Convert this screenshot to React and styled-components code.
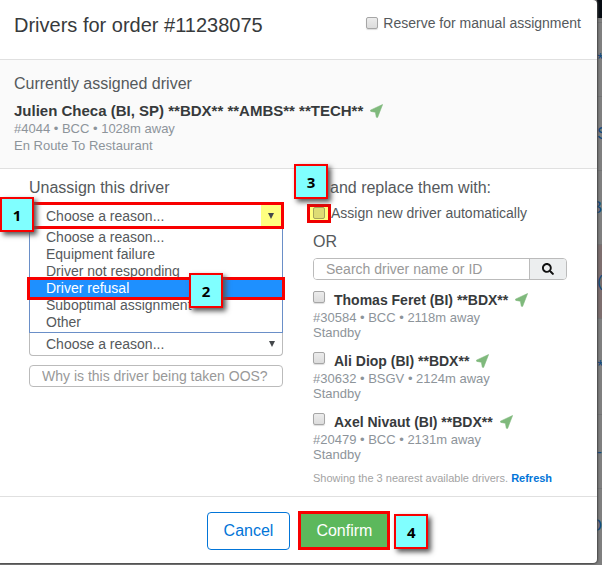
import React from "react";
import styled, { createGlobalStyle } from "styled-components";
import { FaSearch } from "react-icons/fa";

const GlobalStyle = createGlobalStyle`
  *, *::before, *::after { box-sizing: border-box; }
  body {
    margin: 0;
    background: #7f7f7f;
    color: #55595c;
    font-family: "Liberation Sans", Arial, sans-serif;
    font-size: 14px;
    line-height: 18px;
  }
  button, input, select { font: inherit; color: inherit; margin: 0; }
  h1, h2, p, ul { margin: 0; padding: 0; font-weight: normal; }
`;

const Page = styled.div`
  display: grid;
  grid-template-columns: minmax(0, 1fr) 5px;
  min-height: 100vh;
  overflow: hidden;
`;

const Dialog = styled.main`
  align-self: start;
  background: #fff;
  border-radius: 0 4px 4px 0;
  box-shadow: 0 0 2px 1px #444;
  z-index: 1;
`;

const Backdrop = styled.aside`
  overflow: hidden;
  background: #7f7f7f;
`;

const BackdropBar = styled.div`
  height: 18px;
  margin-bottom: 4px;
  background: #060c12;
`;

const BackdropRow = styled.div`
  display: flex;
  justify-content: ${(p) => p.$align || "flex-end"};
  align-items: center;
  height: ${(p) => p.$height || 74}px;
  border-top: 1px solid #737475;
  background: ${(p) => (p.$alert ? "#7d6e6e" : "transparent")};
  color: #134a80;
  font-size: 17px;
`;

const Header = styled.header`
  display: flex;
  justify-content: space-between;
  padding: 12px 16px 21px 14px;
  border-bottom: 1px solid #e0e0e0;
`;

const Title = styled.h1`
  color: #373a3c;
  font-size: 20px;
  line-height: 26px;
`;

const CheckLabel = styled.label`
  display: flex;
  align-items: center;
  gap: ${(p) => p.$gap || 5}px;
  height: 22px;
`;

const Checkbox = styled.input`
  appearance: none;
  flex: none;
  width: 12px;
  height: 12px;
  border: 1px solid #a6a6a6;
  border-radius: 2px;
  background: linear-gradient(#ececec, #dcdcdc);
  box-shadow: 0 1px 1px #ddd;
  &:checked { background: #0275d8; }
`;

const Assigned = styled.section`
  padding: 14px;
  background: #fafafa;
  border-bottom: 1px solid #e0e0e0;
`;

const SectionTitle = styled.h2`
  font-size: 16px;
  line-height: 20px;
  padding-left: ${(p) => p.$indent || 0}px;
`;

const DriverName = styled.div`
  display: flex;
  align-items: center;
  gap: 7px;
  color: #373a3c;
  font-size: 14px;
  font-weight: bold;
  line-height: 18px;
`;

const Meta = styled.p`
  color: #8d949a;
  font-size: 13px;
  line-height: ${(p) => p.$line || 15}px;
`;

const AssignedName = styled(DriverName)`
  margin-top: 8px;
  font-size: 15px;
`;

const Columns = styled.div`
  display: grid;
  grid-template-columns: minmax(0, 1fr) minmax(0, 1fr);
  gap: 30px;
  padding: 9px 30px 10px 29px;
`;

const Column = styled.section`
  display: flex;
  flex-direction: column;
`;

const SelectWrap = styled.div`
  position: relative;
  display: flex;
  height: ${(p) => (p.$marked ? 27 : 23)}px;
  margin: ${(p) => (p.$marked ? "4px -1px 0 -1px" : "0")};
  border: ${(p) => (p.$marked ? "3px solid #f80000" : "1px solid #bbb")};
  border-top-width: ${(p) => (p.$marked ? 3 : 0)}px;
  border-radius: ${(p) => (p.$marked ? "0" : "0 0 4px 4px")};
`;

const Select = styled.select`
  appearance: none;
  flex: 1;
  width: 100%;
  border: 0;
  background: transparent;
  padding: 0 26px 0 ${(p) => (p.$marked ? 15 : 16)}px;
  outline: none;
`;

const Arrow = styled.span`
  position: absolute;
  inset: 0 0 0 auto;
  display: flex;
  align-items: center;
  justify-content: center;
  width: 20px;
  background: ${(p) => (p.$marked ? "#ffff80" : "transparent")};
  pointer-events: none;
`;

const Options = styled.ul`
  list-style: none;
  border: 1px solid #6a8fc8;
  border-top: 0;
  padding: 0 0 1px;
`;

const Option = styled.li`
  position: relative;
  height: 17px;
  padding-left: 16px;
  line-height: 16px;
  color: ${(p) => (p.$active ? "#fff" : "inherit")};
  background: ${(p) => (p.$active ? "#1e90ff" : "transparent")};
  outline: ${(p) => (p.$active ? "3px solid #f80000" : "none")};
  z-index: ${(p) => (p.$active ? 1 : "auto")};
`;

const Reason = styled.input`
  width: 100%;
  height: 22px;
  margin-top: 9px;
  padding: 0 12px;
  border: 1px solid #bbb;
  border-radius: 4px;
  &::placeholder { color: #999; opacity: 1; }
`;

const Anchor = styled.div`
  position: relative;
`;

const Marker = styled.span`
  position: absolute;
  left: ${(p) => p.$x}px;
  top: ${(p) => p.$y}px;
  z-index: 3;
  display: flex;
  align-items: center;
  justify-content: center;
  width: 34px;
  height: 35px;
  border: 2px solid #f80000;
  background: #80ffff;
  box-shadow: 3px 3px 5px #555;
  color: #000;
  font: bold 15px "Open Sans", sans-serif;
`;

const MarkedBox = styled.span`
  display: flex;
  align-items: center;
  justify-content: center;
  width: 24px;
  height: 19px;
  margin-left: -6px;
  border: 3px solid #f00000;
  background: #ffff80;
  ${Checkbox} { background: #dddc74; border-color: #a5a45c; box-shadow: none; }
`;

const AutoLabel = styled.label`
  display: flex;
  align-items: center;
  height: 20px;
  margin-top: 5px;
`;

const Or = styled.p`
  margin: 9px 0 6px;
  font-size: 16px;
  line-height: 20px;
`;

const Search = styled.form`
  display: flex;
  height: 22px;
  border: 1px solid #bbb;
  border-radius: 4px;
  overflow: hidden;
  input {
    flex: 1;
    min-width: 0;
    border: 0;
    padding: 0 12px;
  }
  input::placeholder { color: #999; opacity: 1; }
  button {
    display: grid;
    place-items: center;
    width: 37px;
    padding: 0;
    border: 0;
    border-left: 1px solid #bbb;
    background: #eceeef;
    color: #111;
  }
`;

const Driver = styled.article`
  height: 61px;
  ${CheckLabel} { height: 19px; align-items: flex-start; }
`;

const Drivers = styled.div`
  margin-top: 11px;
`;

const Nearest = styled.p`
  margin-top: -4px;
  color: #a3a3a3;
  font-size: 11px;
  line-height: 16px;
  white-space: nowrap;
  a { color: #0275d8; font-weight: bold; text-decoration: none; }
`;

const Footer = styled.footer`
  display: flex;
  justify-content: center;
  align-items: center;
  gap: 8px;
  padding: 14px 14px 13px;
  border-top: 1px solid #e0e0e0;
`;

const Button = styled.button`
  display: block;
  height: ${(p) => (p.$primary ? 39 : 38)}px;
  padding: 0 ${(p) => (p.$primary ? 15 : 16)}px;
  border: ${(p) => (p.$primary ? "3px solid #f80000" : "1px solid #0275d8")};
  border-radius: ${(p) => (p.$primary ? 0 : 4)}px;
  background: ${(p) => (p.$primary ? "#5cb85c" : "#fff")};
  color: ${(p) => (p.$primary ? "#fff" : "#0275d8")};
  font-size: 16px;
`;

const reasons = [
  "Choose a reason...",
  "Equipment failure",
  "Driver not responding",
  "Driver refusal",
  "Suboptimal assignment",
  "Other",
];

const drivers = [
  { name: "Thomas Feret (BI) **BDX**", meta: "#30584 • BCC • 2118m away" },
  { name: "Ali Diop (BI) **BDX**", meta: "#30632 • BSGV • 2124m away" },
  { name: "Axel Nivaut (BI) **BDX**", meta: "#20479 • BCC • 2131m away" },
];

function LocationArrow() {
  return (
    <svg width="13" height="14" viewBox="0 0 13 14" aria-hidden="true">
      <path
        d="M12.6 .5 .4 6.2 .8 7.4 5.4 8.2 6.3 13.2 7.6 13.4Z"
        fill="#7fb97c"
        stroke="#7fb97c"
        strokeWidth=".6"
        strokeLinejoin="round"
      />
    </svg>
  );
}

function ReasonSelect({ marked, label }) {
  return (
    <SelectWrap $marked={marked}>
      <Select $marked={marked} aria-label={label}>
        {reasons.map((r) => <option key={r}>{r}</option>)}
      </Select>
      <Arrow $marked={marked}>
        <svg width="6" height="6" viewBox="0 0 6 6" aria-hidden="true">
          <path d="M0 0H6L3 6Z" fill="#44484b" />
        </svg>
      </Arrow>
      {marked && <Marker $x={-31} $y={-8}>1</Marker>}
    </SelectWrap>
  );
}

export default function App() {
  return (
    <>
      <GlobalStyle />
      <Page>
        <Dialog>
          <Header>
            <Title>Drivers for order #11238075</Title>
            <CheckLabel>
              <Checkbox type="checkbox" />
              Reserve for manual assignment
            </CheckLabel>
          </Header>
          <Assigned>
            <SectionTitle>Currently assigned driver</SectionTitle>
            <AssignedName>
              Julien Checa (BI, SP) **BDX** **AMBS** **TECH**
              <LocationArrow />
            </AssignedName>
            <Meta $line={17}>#4044 • BCC • 1028m away</Meta>
            <Meta $line={17}>En Route To Restaurant</Meta>
          </Assigned>
          <Columns>
            <Column>
              <SectionTitle>Unassign this driver</SectionTitle>
              <ReasonSelect marked label="Reason for unassigning" />
              <Options role="listbox" aria-label="Reasons">
                {reasons.map((r, i) => (
                  <Option key={r} role="option" aria-selected={i === 3} $active={i === 3}>
                    {r}
                    {i === 3 && <Marker $x={159} $y={-7}>2</Marker>}
                  </Option>
                ))}
              </Options>
              <ReasonSelect label="Reason for going out of service" />
              <Reason
                aria-label="Why is this driver being taken OOS?"
                placeholder="Why is this driver being taken OOS?"
              />
            </Column>
            <Column>
              <Anchor>
                <SectionTitle $indent={17}>and replace them with:</SectionTitle>
                <Marker $x={-19} $y={-14}>3</Marker>
              </Anchor>
              <AutoLabel>
                <MarkedBox><Checkbox type="checkbox" /></MarkedBox>
                Assign new driver automatically
              </AutoLabel>
              <Or>OR</Or>
              <Search onSubmit={(e) => e.preventDefault()}>
                <input aria-label="Search driver" placeholder="Search driver name or ID" />
                <button type="submit" aria-label="Search"><FaSearch size={12} /></button>
              </Search>
              <Drivers>
                {drivers.map((d) => (
                  <Driver key={d.name}>
                    <CheckLabel $gap={9}>
                      <Checkbox type="checkbox" />
                      <DriverName>{d.name}<LocationArrow /></DriverName>
                    </CheckLabel>
                    <Meta>{d.meta}</Meta>
                    <Meta>Standby</Meta>
                  </Driver>
                ))}
              </Drivers>
              <Nearest>
                Showing the 3 nearest available drivers. <a href="#refresh">Refresh</a>
              </Nearest>
            </Column>
          </Columns>
          <Footer>
            <Button type="button">Cancel</Button>
            <Anchor>
              <Button type="button" $primary>Confirm</Button>
              <Marker $x={96} $y={3}>4</Marker>
            </Anchor>
          </Footer>
        </Dialog>
        <Backdrop aria-hidden="true">
          <BackdropBar />
          <BackdropRow $align="flex-start">*</BackdropRow>
          <BackdropRow $align="flex-start">S</BackdropRow>
          <BackdropRow>B</BackdropRow>
          <BackdropRow $alert $align="flex-start">(I</BackdropRow>
          <BackdropRow $height={96} $align="flex-start">*</BackdropRow>
          <BackdropRow>-</BackdropRow>
          <BackdropRow>O</BackdropRow>
        </Backdrop>
      </Page>
    </>
  );
}
